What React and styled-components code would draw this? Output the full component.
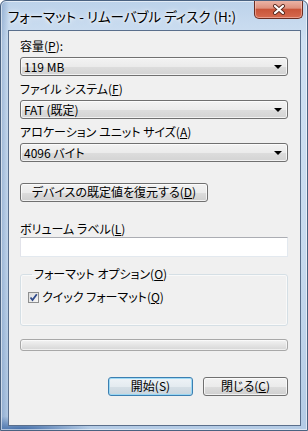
import styled, { createGlobalStyle } from 'styled-components';

const GlobalStyle = createGlobalStyle`
  html, body { margin: 0; padding: 0; background: #ffffff; }
  body {
    font-family: "Noto Sans CJK JP", "Liberation Sans", sans-serif;
    font-size: 12px;
    color: #000;
  }
`;

const Window = styled.div`
  width: 308px;
  height: 431px;
  box-sizing: border-box;
  border: 1px solid #4a6281;
  border-radius: 6px 6px 0 0;
  background:
    radial-gradient(ellipse 70px 14px at 20px 100%, #3f6aa6 0%, rgba(63, 106, 166, 0) 100%),
    linear-gradient(90deg, rgba(70, 110, 165, 0.35) 0px, rgba(70, 110, 165, 0) 8px),
    linear-gradient(180deg, #bcd2ea 0%, #cfe0f2 40px, #c6d9ee 60%, #b4cbe5 100%);
  box-shadow: inset 0 0 0 1px rgba(255, 255, 255, 0.55);
  display: flex;
  flex-direction: column;
  overflow: hidden;
`;

const TitleBar = styled.div`
  height: 29px;
  flex-shrink: 0;
  display: flex;
  justify-content: space-between;
  align-items: flex-start;
`;

const TitleText = styled.div`
  padding: 6px 0 0 7px;
  font-size: 13.5px;
  line-height: 18px;
  font-feature-settings: "palt";
  color: #000;
  text-shadow: 0 0 6px #ffffff, 0 0 3px #ffffff;
  white-space: nowrap;
`;

const CloseButton = styled.div`
  width: 49px;
  height: 19px;
  margin: -1px 4px 0 0;
  box-sizing: border-box;
  border: 1px solid #6b2d22;
  border-top: none;
  border-radius: 0 0 5px 5px;
  background: linear-gradient(180deg, #ecb8ab 0%, #de917e 45%, #c9553a 52%, #d66a4f 100%);
  box-shadow: inset 0 0 0 1px rgba(255, 210, 200, 0.5);
  display: flex;
  align-items: center;
  justify-content: center;
`;

const Client = styled.div`
  flex: 1;
  margin: 0 6px 4px 7px;
  border: 1px solid #5a6f8c;
  background: #f0f0f0;
  padding: 8px 12px 0 11px;
  display: flex;
  flex-direction: column;
`;

const Field = styled.div`
  display: flex;
  flex-direction: column;
  gap: ${(p) => p.$gap ?? 4}px;
  margin-top: ${(p) => p.$top ?? 0}px;
`;

const Label = styled.div`
  line-height: 14px;
  font-feature-settings: "palt";
  white-space: nowrap;
`;

const Key = styled.span`
  text-decoration: underline;
  text-underline-offset: 1px;
`;

const Combo = styled.div`
  height: 19px;
  box-sizing: border-box;
  border: 1px solid #707070;
  border-radius: 3px;
  background: linear-gradient(180deg, #f3f3f3 0%, #ebebeb 50%, #dddddd 51%, #d3d3d3 100%);
  box-shadow: inset 0 0 0 1px rgba(255, 255, 255, 0.7);
  display: flex;
  align-items: center;
  justify-content: space-between;
  padding: 0 5px 0 3px;
  font-feature-settings: "palt";
  line-height: 14px;
`;

const Arrow = styled.div`
  width: 0;
  height: 0;
  border-left: 4px solid transparent;
  border-right: 4px solid transparent;
  border-top: 4px solid #000;
  margin-top: 1px;
`;

const PushButton = styled.div`
  width: ${(p) => p.$w}px;
  height: 19px;
  box-sizing: border-box;
  border: 1px solid ${(p) => (p.$default ? '#3c7fb1' : '#707070')};
  border-radius: 3px;
  background: ${(p) =>
    p.$default
      ? 'linear-gradient(180deg, #eef3f7 0%, #e4ebf0 50%, #d5dfe6 51%, #c9d5de 100%)'
      : 'linear-gradient(180deg, #f2f2f2 0%, #ebebeb 50%, #dddddd 51%, #cfcfcf 100%)'};
  box-shadow: inset 0 0 0 1px ${(p) => (p.$default ? 'rgba(150, 215, 245, 0.9)' : 'rgba(255, 255, 255, 0.7)')};
  display: flex;
  align-items: center;
  justify-content: center;
  line-height: 14px;
  font-feature-settings: "palt";
  white-space: nowrap;
  margin-top: ${(p) => p.$top ?? 0}px;
  padding-bottom: 1px;
`;

const TextBox = styled.div`
  height: 20px;
  box-sizing: border-box;
  background: #ffffff;
  border: 1px solid #e3e9ef;
  border-top-color: #abadb3;
  border-left-color: #e2e3ea;
`;

const Group = styled.fieldset`
  margin: 10px 0 0 0;
  padding: 9px 8px 21px 7px;
  border: 1px solid #d5dfe5;
  border-radius: 3px;
  box-shadow: inset 0 0 0 1px rgba(255, 255, 255, 0.6);
`;

const Legend = styled.legend`
  padding: 0 2px;
  margin-left: 4px;
  line-height: 14px;
  font-feature-settings: "palt";
`;

const CheckRow = styled.div`
  display: flex;
  align-items: center;
  gap: 3px;
  line-height: 14px;
  font-feature-settings: "palt";
`;

const CheckBox = styled.div`
  width: 11px;
  height: 11px;
  box-sizing: border-box;
  border: 1px solid #8e8f8f;
  background: linear-gradient(135deg, #dcdcdc 0%, #f7f7f7 100%);
  display: flex;
  align-items: center;
  justify-content: center;
`;

const Progress = styled.div`
  margin-top: 13px;
  height: 12px;
  box-sizing: border-box;
  border: 1px solid #a8a8a8;
  border-radius: 3px;
  background: linear-gradient(180deg, #f3f3f3 0%, #e6e6e6 45%, #d6d6d6 100%);
  box-shadow: inset 0 0 0 1px rgba(255, 255, 255, 0.6);
`;

const ButtonRow = styled.div`
  margin-top: 26px;
  display: flex;
  justify-content: flex-end;
  gap: 10px;
`;

function CloseGlyph() {
  return (
    <svg width="14" height="11" viewBox="0 0 14 11">
      <path d="M3 2 L11 9 M11 2 L3 9" stroke="#5a2a20" strokeWidth="4" strokeLinecap="round" />
      <path d="M3 2 L11 9 M11 2 L3 9" stroke="#ffffff" strokeWidth="2.2" strokeLinecap="round" />
    </svg>
  );
}

function CheckMark() {
  return (
    <svg width="9" height="9" viewBox="0 0 9 9">
      <path d="M1.5 4.5 L3.5 7 L7.8 1.2" stroke="#2f4a8a" strokeWidth="1.8" fill="none" />
    </svg>
  );
}

function DropDown({ label, keyChar, suffix = '', value, top }) {
  return (
    <Field $top={top}>
      <Label>
        {label}(<Key>{keyChar}</Key>){suffix}
      </Label>
      <Combo>
        <span>{value}</span>
        <Arrow />
      </Combo>
    </Field>
  );
}

export default function App() {
  return (
    <>
      <GlobalStyle />
      <Window>
        <TitleBar>
          <TitleText>フォーマット - リムーバブル ディスク (H:)</TitleText>
          <CloseButton>
            <CloseGlyph />
          </CloseButton>
        </TitleBar>
        <Client>
          <DropDown label="容量" keyChar="P" suffix=":" value="119 MB" />
          <DropDown label="ファイル システム" keyChar="F" value="FAT (既定)" top={6} />
          <DropDown label="アロケーション ユニット サイズ" keyChar="A" value="4096 バイト" top={6} />

          <PushButton $w={188} $top={21}>
            デバイスの既定値を復元する(<Key>D</Key>)
          </PushButton>

          <Field $top={20} $gap={1}>
            <Label>
              ボリューム ラベル(<Key>L</Key>)
            </Label>
            <TextBox />
          </Field>

          <Group>
            <Legend>
              フォーマット オプション(<Key>O</Key>)
            </Legend>
            <CheckRow>
              <CheckBox>
                <CheckMark />
              </CheckBox>
              <span>
                クイック フォーマット(<Key>Q</Key>)
              </span>
            </CheckRow>
          </Group>

          <Progress />

          <ButtonRow>
            <PushButton $w={85} $default>
              開始(S)
            </PushButton>
            <PushButton $w={85}>
              閉じる(<Key>C</Key>)
            </PushButton>
          </ButtonRow>
        </Client>
      </Window>
    </>
  );
}
